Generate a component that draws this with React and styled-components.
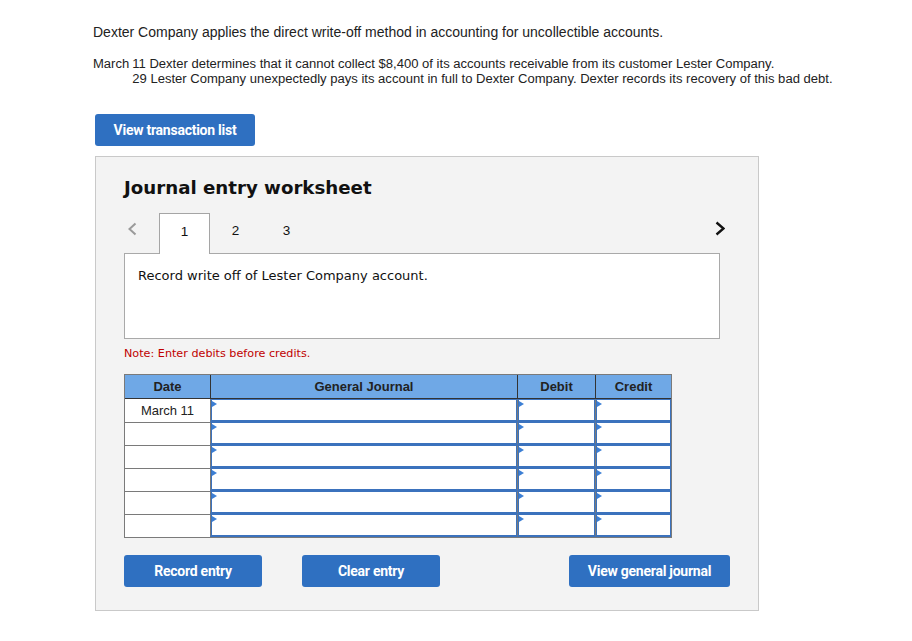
import React from "react";
import styled, { createGlobalStyle } from "styled-components";

const Global = createGlobalStyle`
  html, body { margin: 0; padding: 0; background: #fff; }
  body { font-family: "Liberation Sans", Arial, sans-serif; color: #222; }
`;

const Page = styled.div`
  padding: 24px 0 30px 93px;
  width: 819px;
`;

const Intro = styled.p`
  margin: 0 0 15px 0;
  font-size: 14px;
  line-height: 17px;
  color: #222;
`;

const Events = styled.div`
  display: grid;
  grid-template-columns: auto 1fr;
  column-gap: 3px;
  font-size: 13.05px;
  line-height: 15px;
  color: #222;
`;

const EventRow = styled.div`
  display: contents;
`;

const Month = styled.span``;

const EventText = styled.span`
  white-space: nowrap;
`;

const BlueButton = styled.button`
  display: flex;
  align-items: center;
  justify-content: center;
  width: ${(p) => p.$w}px;
  height: 32px;
  border: none;
  border-radius: 3px;
  background: #2f70c1;
  color: #fff;
  font-family: Roboto, "Liberation Sans", sans-serif;
  font-weight: 700;
  font-size: 14px;
  letter-spacing: -0.25px;
  padding: 0;
  cursor: pointer;
`;

const TopBar = styled.div`
  margin-top: 28px;
  margin-left: 2px;
`;

const Panel = styled.div`
  margin-top: 10px;
  margin-left: 2px;
  width: 664px;
  height: 455px;
  background: #f3f3f3;
  border: 1px solid #c9c9c9;
  padding: 20px 0 0 28px;
  box-sizing: border-box;
  font-family: "DejaVu Sans", Verdana, sans-serif;
`;

const Title = styled.h2`
  margin: 0;
  font-size: 18.2px;
  font-weight: 700;
  color: #111;
  line-height: 22px;
`;

const TabBar = styled.div`
  display: flex;
  align-items: stretch;
  height: 40px;
  margin-top: 14px;
  width: 604px;
  position: relative;
  z-index: 1;
`;

const Arrow = styled.div`
  display: flex;
  align-items: center;
  justify-content: ${(p) => p.$justify};
  width: ${(p) => p.$w}px;
  padding-left: ${(p) => p.$pl || 0}px;
  padding-bottom: 9px;
  box-sizing: border-box;
`;

const Tab = styled.div`
  width: 51px;
  display: flex;
  align-items: center;
  justify-content: center;
  font-family: "Liberation Sans", Arial, sans-serif;
  font-size: 13.5px;
  color: #111;
  box-sizing: border-box;
  background: ${(p) => (p.$active ? "#fff" : "transparent")};
  border: 1px solid ${(p) => (p.$active ? "#a5a5a5" : "transparent")};
  border-bottom: none;
  margin-bottom: ${(p) => (p.$active ? "-1px" : "0")};
  padding-bottom: 6px;
`;

const Spacer = styled.div`
  flex: 1;
`;

const Prompt = styled.div`
  width: 596px;
  height: 86px;
  box-sizing: border-box;
  background: #fff;
  border: 1px solid #a9a9a9;
  padding: 14px 13px;
  font-size: 13px;
  color: #111;
`;

const Note = styled.div`
  margin-top: 8px;
  font-size: 11.2px;
  line-height: 13px;
  color: #c00000;
`;

const Table = styled.div`
  margin-top: 14px;
  width: 548px;
  border: 1px solid #7a7a7a;
  display: grid;
  grid-template-columns: 85px 307px 78px 76px;
  box-sizing: border-box;
`;

const Head = styled.div`
  height: 23px;
  background: #6fa8e6;
  border-bottom: 1px solid #333;
  border-left: ${(p) => (p.$first ? "none" : "1px solid #333")};
  display: flex;
  align-items: center;
  justify-content: center;
  font-family: "Liberation Sans", Arial, sans-serif;
  font-weight: 700;
  font-size: 13px;
  color: #222;
`;

const DateCell = styled.div`
  height: 23px;
  box-sizing: border-box;
  border-top: ${(p) => (p.$first ? "none" : "1px solid #7a7a7a")};
  background: #fff;
  display: flex;
  align-items: center;
  justify-content: center;
  font-family: "Liberation Sans", Arial, sans-serif;
  font-size: 13px;
  color: #222;
`;

const InputCell = styled.div`
  height: 23px;
  box-sizing: border-box;
  border-left: 1px solid #7a7a7a;
  background: #fff;
  position: relative;
  border-top: 1px solid #3b72bd;
  border-right: 1px solid #3b72bd;
  border-bottom: 2px solid #3b72bd;
  box-shadow: inset 1px 0 0 #3b72bd;
  &::before {
    content: "";
    position: absolute;
    left: 1px;
    top: 1px;
    border-left: 5px solid #3c7fd4;
    border-top: 3px solid transparent;
    border-bottom: 3px solid transparent;
  }
`;

const Buttons = styled.div`
  display: flex;
  margin-top: 17px;
  width: 606px;
`;

const Gap = styled.div`
  width: ${(p) => p.$w}px;
`;

const rows = ["March 11", "", "", "", "", ""];

function Chevron({ dir, color, sw, w, h }) {
  return (
    <svg width={w} height={h} viewBox={`0 0 ${w} ${h}`}>
      <path
        d={
          dir === "left"
            ? `M${w - 1.5} 1.5 L1.5 ${h / 2} L${w - 1.5} ${h - 1.5}`
            : `M1.5 1.5 L${w - 1.5} ${h / 2} L1.5 ${h - 1.5}`
        }
        fill="none"
        stroke={color}
        strokeWidth={sw}
      />
    </svg>
  );
}

export default function App() {
  return (
    <>
      <Global />
      <Page>
        <Intro>Dexter Company applies the direct write-off method in accounting for uncollectible accounts.</Intro>
        <Events>
          <EventRow>
            <Month>March</Month>
            <EventText>11 Dexter determines that it cannot collect $8,400 of its accounts receivable from its customer Lester Company.</EventText>
          </EventRow>
          <EventRow>
            <Month></Month>
            <EventText>29 Lester Company unexpectedly pays its account in full to Dexter Company. Dexter records its recovery of this bad debt.</EventText>
          </EventRow>
        </Events>
        <TopBar>
          <BlueButton $w={160}>View transaction list</BlueButton>
        </TopBar>
        <Panel>
          <Title>Journal entry worksheet</Title>
          <TabBar>
            <Arrow $w={35} $justify="flex-start" $pl={4}>
              <Chevron dir="left" color="#9a9a9a" sw={2} w={9} h={14} />
            </Arrow>
            <Tab $active>1</Tab>
            <Tab>2</Tab>
            <Tab>3</Tab>
            <Spacer />
            <Arrow $w={13} $justify="flex-start">
              <Chevron dir="right" color="#111" sw={2.4} w={10} h={15} />
            </Arrow>
          </TabBar>
          <Prompt>Record write off of Lester Company account.</Prompt>
          <Note>Note: Enter debits before credits.</Note>
          <Table>
            <Head $first>Date</Head>
            <Head>General Journal</Head>
            <Head>Debit</Head>
            <Head>Credit</Head>
            {rows.map((d, i) => (
              <React.Fragment key={i}>
                <DateCell $first={i === 0}>{d}</DateCell>
                <InputCell />
                <InputCell />
                <InputCell />
              </React.Fragment>
            ))}
          </Table>
          <Buttons>
            <BlueButton $w={138}>Record entry</BlueButton>
            <Gap $w={40} />
            <BlueButton $w={138}>Clear entry</BlueButton>
            <Spacer />
            <BlueButton $w={161}>View general journal</BlueButton>
          </Buttons>
        </Panel>
      </Page>
    </>
  );
}
